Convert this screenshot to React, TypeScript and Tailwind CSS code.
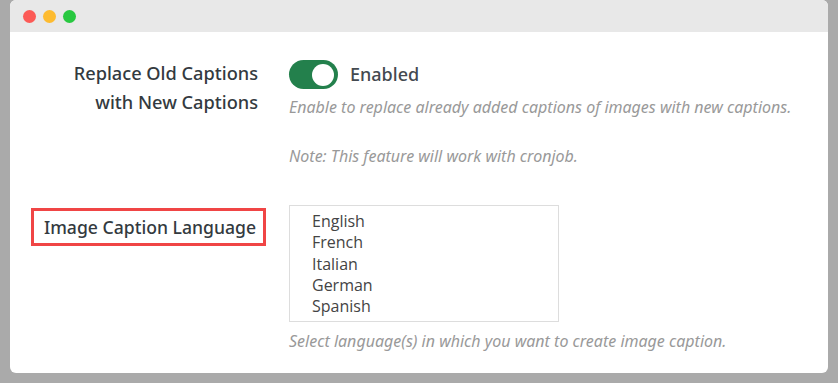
import React from "react";

const languages = ["English", "French", "Italian", "German", "Spanish"];

export default function App() {
  return (
    <main className="w-[838px] h-[383px] bg-[#aaaaaa] pl-[10px] pr-[10px] pb-[10px]">
      <div className="h-full bg-white rounded-md overflow-hidden flex flex-col">
        {/* title bar */}
        <div className="h-[32px] bg-[#e8e8e8] flex items-center gap-[7px] pl-[13px] shrink-0">
          <span className="w-[13px] h-[13px] rounded-full bg-[#fc5a56]" />
          <span className="w-[13px] h-[13px] rounded-full bg-[#fdbb30]" />
          <span className="w-[13px] h-[13px] rounded-full bg-[#28c840]" />
        </div>

        <div
          className="flex flex-col pt-[28px]"
          style={{ fontFamily: '"Noto Sans", "Open Sans", sans-serif' }}
        >
          {/* row 1 */}
          <div className="flex gap-[23px]">
            <div className="w-[256px] pr-[8px] text-right text-[18.2px] leading-[29px] font-medium text-[#333a40] -mt-[1px]">
              Replace Old Captions
              <br />
              with New Captions
            </div>
            <div className="flex flex-col">
              <div className="flex items-center gap-[12px]">
                <div className="relative w-[49px] h-[29px] rounded-full bg-[#23804c]">
                  <span className="absolute top-[3.5px] right-[4px] w-[22px] h-[22px] rounded-full bg-white" />
                </div>
                <span className="text-[18px] font-medium text-[#444a50]">Enabled</span>
              </div>
              <p className="mt-[8px] text-[16px] italic text-[#999999] leading-[20px]">
                Enable to replace already added captions of images with new captions.
              </p>
              <p className="mt-[29px] text-[16px] italic text-[#999999] leading-[20px]">
                Note: This feature will work with cronjob.
              </p>
            </div>
          </div>

          {/* row 2 */}
          <div className="flex gap-[23px] mt-[39px]">
            <div className="w-[256px] flex justify-end pt-[3px] pl-[20px]">
              <div className="border-[3px] border-[#f04545] pl-[10px] pr-[7px] h-[38px] flex items-center text-[17.6px] font-medium text-[#333a40] whitespace-nowrap">
                Image Caption Language
              </div>
            </div>
            <div className="flex flex-col">
              <div
                className="w-[270px] h-[117px] border border-[#dddddd] pl-[22px] pt-[5px] text-[16px] leading-[21.25px] text-[#444444]"
                style={{ fontFamily: '"Open Sans", sans-serif' }}
              >
                {languages.map((l) => (
                  <div key={l}>{l}</div>
                ))}
              </div>
              <p className="mt-[9px] text-[16px] italic text-[#999999] leading-[20px]">
                Select language(s) in which you want to create image caption.
              </p>
            </div>
          </div>
        </div>
      </div>
    </main>
  );
}
